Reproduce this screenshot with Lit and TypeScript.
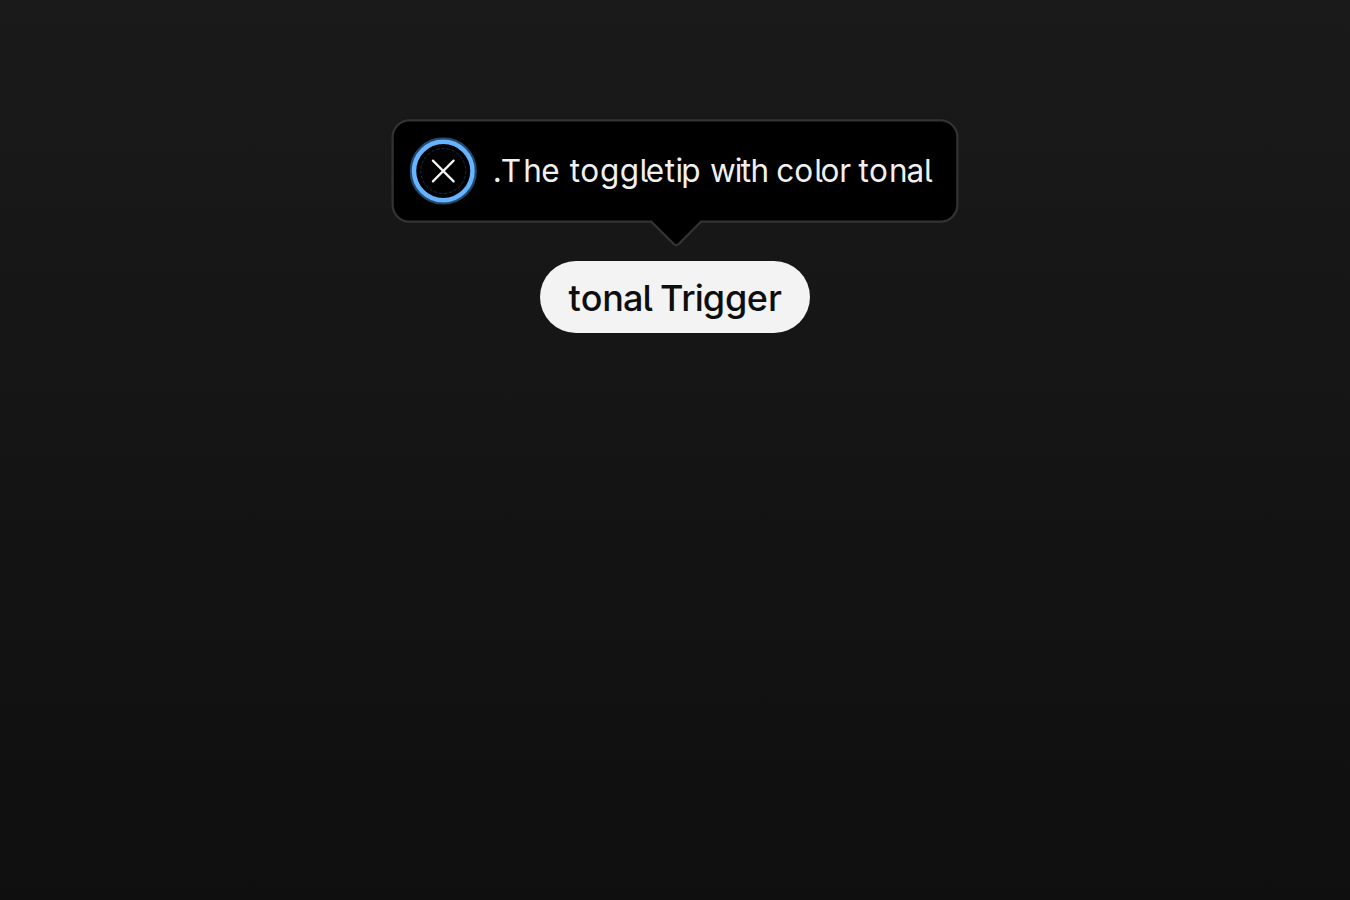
import { LitElement, html, css } from "lit";
import { customElement } from "lit/decorators.js";

type Glyph = [string, number];

const MESSAGE: Glyph[] = [
  ["T", 10], ["h", 8], ["e", 8], [" ", 4.7],
  ["t", 4.7], ["o", 8.7], ["g", 8.8], ["g", 8.8], ["l", 2.8], ["e", 8.4], ["t", 4.8], ["i", 2.6], ["p", 8.2], [" ", 4.6],
  ["w", 11], ["i", 2.7], ["t", 4.3], ["h", 7.8], [" ", 3.7],
  ["c", 8], ["o", 8.8], ["l", 2.8], ["o", 8.4], ["r", 5], [" ", 3.5],
  ["t", 4.7], ["o", 8.9], ["n", 7.8], ["a", 7.8], ["l", 4.3],
];

const STOP: Glyph[] = [[".", 3.6]];

const TRIGGER: Glyph[] = [
  ["t", 5.5], ["o", 9.5], ["n", 9.3], ["a", 8.7], ["l", 3.7], [" ", 4],
  ["T", 9.5], ["r", 6], ["i", 3.5], ["g", 9.9], ["g", 9.6], ["e", 9.6], ["r", 6],
];

@customElement("app-root")
export class AppRoot extends LitElement {
  static styles = css`
    :host {
      display: block;
      box-sizing: border-box;
      height: 900px;
      overflow: hidden;
      background: linear-gradient(#1a1a1a, #0f0f0f);
      font-family: Inter, "Liberation Sans", sans-serif;
      font-feature-settings: "cv05";
      direction: rtl;
    }
    .stage {
      box-sizing: border-box;
      display: flex;
      flex-direction: column;
      align-items: center;
      gap: 17px;
      width: 600px;
      height: 400px;
      padding-top: 53px;
      margin-right: auto;
      transform: scale(2.25);
      transform-origin: 0 0;
    }
    .tip {
      position: relative;
      box-sizing: border-box;
      display: flex;
      align-items: center;
      justify-content: space-between;
      width: 252px;
      height: 46px;
      padding: 0 10px 0 7px;
      border: 1px solid #333;
      border-radius: 8px;
      background: #000;
      color: #f0f0f0;
      font-size: 14px;
      line-height: 20px;
      white-space: nowrap;
    }
    .run {
      direction: ltr;
      unicode-bidi: isolate;
      white-space: pre;
    }
    .glyph {
      display: inline-block;
      white-space: pre;
    }
    .close {
      display: block;
      flex: none;
      width: 30px;
      height: 30px;
    }
    .arrow {
      position: absolute;
      left: 114px;
      top: 43px;
      width: 24px;
      height: 13px;
    }
    .trigger {
      box-sizing: border-box;
      width: 120px;
      height: 32px;
      padding: 0;
      border: 0;
      border-radius: 16px;
      background: #f3f3f3;
      color: #0e0e0e;
      font: 500 16px Inter, "Liberation Sans", sans-serif;
      font-feature-settings: "cv05";
      white-space: nowrap;
    }
  `;

  private run(glyphs: Glyph[]) {
    return html`<span class="run">${glyphs.map(
      ([c, w]) => html`<span class="glyph" style="width:${w}px">${c}</span>`
    )}</span>`;
  }

  render() {
    return html`
      <div class="stage">
        <div class="tip">
          <span class="message">${this.run(MESSAGE)}${this.run(STOP)}</span>
          <svg class="close" viewBox="0 0 30 30" fill="none" aria-label="Close">
            <circle cx="15" cy="15" r="14.4" stroke="#24486b" stroke-width="1.1" />
            <circle cx="15" cy="15" r="13" stroke="#66b3ff" stroke-width="2" />
            <circle cx="15" cy="15" r="10" stroke="#1a3b59" stroke-width=".35" stroke-dasharray="1.5 .8" />
            <path d="M10.4 10.4 19.6 19.6M19.6 10.4 10.4 19.6" stroke="#f3f3f3" stroke-linecap="round" />
          </svg>
          <svg class="arrow" viewBox="0.6 -0.7 54 29.25" fill="none">
            <path d="M1.6 -.7V2L24.2 25.2Q26.6 27 29 25.2L51.6 2V-.7Z" fill="#000" />
            <path d="M1 2 24.2 25.2Q26.6 27 29 25.2L52 2" stroke="#333" stroke-width="2.25" />
          </svg>
        </div>
        <button class="trigger">${this.run(TRIGGER)}</button>
      </div>
    `;
  }
}
